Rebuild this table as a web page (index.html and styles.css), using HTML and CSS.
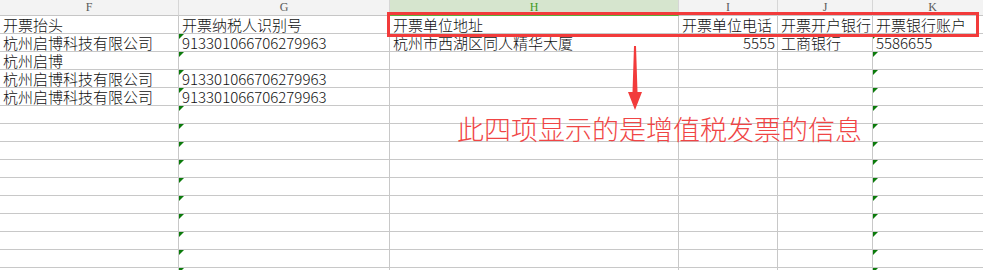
FILE: index.html
```html
<!DOCTYPE html>
<html lang="zh-CN">
<head>
<meta charset="utf-8">
<title>开票信息</title>
<link rel="stylesheet" href="styles.css">
</head>
<body>
<div class="sheet">
  <div class="grid">
    <div class="colhead">F</div>
    <div class="colhead">G</div>
    <div class="colhead sel">H</div>
    <div class="colhead">I</div>
    <div class="colhead">J</div>
    <div class="colhead">K</div>

    <div class="cell">开票抬头</div>
    <div class="cell">开票纳税人识别号</div>
    <div class="cell">开票单位地址</div>
    <div class="cell">开票单位电话</div>
    <div class="cell">开票开户银行</div>
    <div class="cell">开票银行账户</div>

    <div class="cell">杭州启博科技有限公司</div>
    <div class="cell num tri">913301066706279963</div>
    <div class="cell">杭州市西湖区同人精华大厦</div>
    <div class="cell num right">5555</div>
    <div class="cell">工商银行</div>
    <div class="cell num tri">5586655</div>

    <div class="cell">杭州启博</div>
    <div class="cell tri"></div>
    <div class="cell"></div>
    <div class="cell"></div>
    <div class="cell"></div>
    <div class="cell tri"></div>

    <div class="cell">杭州启博科技有限公司</div>
    <div class="cell num tri">913301066706279963</div>
    <div class="cell"></div>
    <div class="cell"></div>
    <div class="cell"></div>
    <div class="cell tri"></div>

    <div class="cell">杭州启博科技有限公司</div>
    <div class="cell num tri">913301066706279963</div>
    <div class="cell"></div>
    <div class="cell"></div>
    <div class="cell"></div>
    <div class="cell tri"></div>

    <div class="cell"></div><div class="cell tri"></div><div class="cell"></div><div class="cell"></div><div class="cell"></div><div class="cell tri"></div>
    <div class="cell"></div><div class="cell tri"></div><div class="cell"></div><div class="cell"></div><div class="cell"></div><div class="cell tri"></div>
    <div class="cell"></div><div class="cell tri"></div><div class="cell"></div><div class="cell"></div><div class="cell"></div><div class="cell tri"></div>
    <div class="cell"></div><div class="cell tri"></div><div class="cell"></div><div class="cell"></div><div class="cell"></div><div class="cell tri"></div>
    <div class="cell"></div><div class="cell tri"></div><div class="cell"></div><div class="cell"></div><div class="cell"></div><div class="cell tri"></div>
    <div class="cell"></div><div class="cell tri"></div><div class="cell"></div><div class="cell"></div><div class="cell"></div><div class="cell tri"></div>
    <div class="cell"></div><div class="cell tri"></div><div class="cell"></div><div class="cell"></div><div class="cell"></div><div class="cell tri"></div>
    <div class="cell"></div><div class="cell tri"></div><div class="cell"></div><div class="cell"></div><div class="cell"></div><div class="cell tri"></div>
    <div class="cell"></div><div class="cell tri"></div><div class="cell"></div><div class="cell"></div><div class="cell"></div><div class="cell tri"></div>
    <div class="cell"></div><div class="cell tri"></div><div class="cell"></div><div class="cell"></div><div class="cell"></div><div class="cell tri"></div>
  </div>

  <div class="redbox"></div>
  <svg class="arrow" width="18" height="66" viewBox="0 0 18 66">
    <polygon points="8,0 10,0 11.5,46 16,46 9,64 2,46 6.5,46" fill="#f23b3b"/>
  </svg>
  <div class="note">此四项显示的是增值税发票的信息</div>
</div>
</body>
</html>
```

FILE: styles.css
```css
html, body {
  margin: 0;
  padding: 0;
  background: #ffffff;
}

.sheet {
  position: relative;
  width: 983px;
  height: 270px;
  overflow: hidden;
}

.grid {
  display: grid;
  grid-template-columns: 179px 211px 289px 99px 95px 120px;
  grid-auto-rows: 18px;
  grid-template-rows: 16px;
}

.colhead {
  background: #f3f3f3;
  border-right: 1px solid #d6d6d6;
  border-bottom: 1px solid #c6c6c6;
  box-sizing: border-box;
  font-family: "Liberation Serif", serif;
  font-size: 12px;
  line-height: 15px;
  color: #5a5a5a;
  text-align: center;
}

.colhead.sel {
  background: #d6e5ce;
  color: #3f9a1e;
  border-bottom: 2px solid #5dae3a;
}

.cell {
  position: relative;
  box-sizing: border-box;
  border-right: 1px solid #c8c8c8;
  border-bottom: 1px solid #c8c8c8;
  padding: 0 2px 0 3px;
  font-family: "Noto Sans CJK SC", "Noto Sans", sans-serif;
  font-weight: 300;
  font-size: 15px;
  line-height: 17px;
  color: #111111;
  white-space: nowrap;
}

.cell.right {
  text-align: right;
}

.cell.tri::before {
  content: "";
  position: absolute;
  left: 0;
  top: 0;
  width: 0;
  height: 0;
  border-top: 5px solid #0b7a0b;
  border-right: 5px solid transparent;
}

.redbox {
  position: absolute;
  left: 387px;
  top: 12px;
  width: 592px;
  height: 25px;
  box-sizing: border-box;
  border: 3px solid #f23b3b;
}

.arrow {
  position: absolute;
  left: 626px;
  top: 46px;
}

.note {
  position: absolute;
  left: 457px;
  top: 114px;
  font-family: "Noto Sans CJK SC", sans-serif;
  font-weight: 300;
  font-size: 27px;
  line-height: 30px;
  color: #f04545;
  white-space: nowrap;
}
```
